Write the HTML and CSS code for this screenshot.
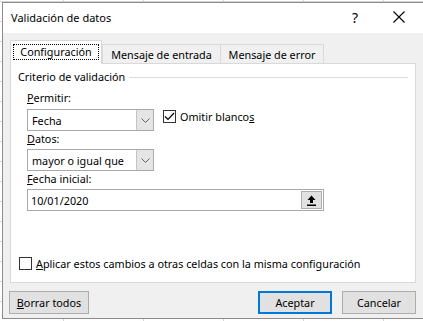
FILE: index.html
```html
<!DOCTYPE html>
<html lang="es">
<head>
    <meta charset="UTF-8">
    <title>Validación de datos</title>
    <link rel="stylesheet" href="styles.css">
</head>
<body>
    <div class="dialog">
        <div class="titlebar">
            <span class="title">Validación de datos</span>
            <span class="help">?</span>
            <svg class="close" width="12" height="12" viewBox="0 0 12 12">
                <path d="M0.5 0.5 L11.5 11.5 M11.5 0.5 L0.5 11.5" stroke="#000" stroke-width="1.1" fill="none"/>
            </svg>
        </div>

        <div class="dialog-body">
            <div class="tabs">
                <div class="tab active"><span class="focus">Configuración</span></div>
                <div class="tab">Mensaje de entrada</div>
                <div class="tab last">Mensaje de error</div>
            </div>

            <div class="panel">
                <div class="group-head">
                    <span>Criterio de validación</span>
                    <span class="rule"></span>
                </div>

                <div class="fields">
                    <div class="field-label first"><u>P</u>ermitir:</div>
                    <div class="row">
                        <div class="combo">
                            <span class="combo-text">Fecha</span>
                            <span class="drop">
                                <svg width="9" height="5" viewBox="0 0 9 5"><path d="M0.5 0.5 L4.5 4.5 L8.5 0.5" stroke="#606060" fill="none"/></svg>
                            </span>
                        </div>
                        <label class="check omit">
                            <span class="box">
                                <svg width="11" height="11" viewBox="0 0 11 11"><path d="M1 5.5 L4 8.5 L10 2" stroke="#000" stroke-width="1.2" fill="none"/></svg>
                            </span>
                            Omitir blanco<u>s</u>
                        </label>
                    </div>

                    <div class="field-label"><u>D</u>atos:</div>
                    <div class="combo">
                        <span class="combo-text">mayor o igual que</span>
                        <span class="drop">
                            <svg width="9" height="5" viewBox="0 0 9 5"><path d="M0.5 0.5 L4.5 4.5 L8.5 0.5" stroke="#606060" fill="none"/></svg>
                        </span>
                    </div>

                    <div class="field-label"><u>F</u>echa inicial:</div>
                    <div class="ref-input">
                        <span class="ref-text">10/01/2020</span>
                        <span class="ref-btn">
                            <svg width="9" height="11" viewBox="0 0 9 11">
                                <path d="M4.5 0.5 L0.5 5 L3 5 L3 8 L6 8 L6 5 L8.5 5 Z" fill="#000"/>
                                <rect x="0" y="9.5" width="9" height="1.5" fill="#000"/>
                            </svg>
                        </span>
                    </div>
                </div>

                <label class="check apply">
                    <span class="box empty"></span>
                    <span><u>A</u>plicar estos cambios a otras celdas con la misma configuración</span>
                </label>
            </div>

            <div class="buttons">
                <button class="btn clear"><u>B</u>orrar todos</button>
                <span class="spacer"></span>
                <button class="btn default">Aceptar</button>
                <button class="btn">Cancelar</button>
            </div>
        </div>
    </div>
</body>
</html>
```

FILE: styles.css
```css
* {
    margin: 0;
    padding: 0;
    box-sizing: border-box;
}

html, body {
    width: 423px;
    height: 321px;
    overflow: hidden;
}

body {
    font-family: 'Segoe UI', 'Noto Sans', 'Open Sans', sans-serif;
    font-size: 10.8px;
    color: #000;
    background-color: #fff;
    background-image:
        linear-gradient(to right, #d4d4d4 1px, transparent 1px),
        linear-gradient(to bottom, #d4d4d4 1px, transparent 1px);
    background-size: 80px 20px;
    background-position: 63px 1px;
}

.dialog {
    margin: 2px 0 0 2px;
    width: 440px;
    height: 317px;
    border: 1px solid #8c8c8c;
    background: #f0f0f0;
    display: flex;
    flex-direction: column;
}

.titlebar {
    height: 30px;
    background: #fff;
    display: flex;
    align-items: center;
    padding-left: 8px;
}

.title {
    font-size: 11px;
    width: 341px;
    margin-top: -1px;
}

.help {
    font-size: 14px;
    width: 41px;
    margin-top: -2px;
}

.close {
    margin-top: -2px;
}

.dialog-body {
    padding: 7px 0 0 7px;
    display: flex;
    flex-direction: column;
}

.tabs {
    display: flex;
    align-items: flex-end;
    margin-bottom: -1px;
}

.tab {
    height: 20px;
    border: 1px solid #d9d9d9;
    border-bottom: none;
    width: 119px;
    display: flex;
    align-items: center;
    justify-content: center;
    padding-bottom: 1px;
}

.tab.last {
    width: 104px;
    margin-left: -1px;
}

.tab.active {
    position: relative;
    z-index: 1;
    width: 92px;
    height: 24px;
    background: #fff;
    align-items: flex-start;
    justify-content: flex-start;
    padding: 3px 0 0 2px;
}

.focus {
    display: block;
    width: 86px;
    height: 16px;
    border: 1px dotted #000;
    line-height: 14px;
    text-align: center;
}

.panel {
    width: 406px;
    height: 220px;
    background: #fff;
    border: 1px solid #d9d9d9;
    padding: 6px 7px 0 7px;
    display: flex;
    flex-direction: column;
}

.group-head {
    display: flex;
    align-items: center;
    height: 14px;
    line-height: 14px;
}

.rule {
    flex: 1;
    height: 1px;
    background: #dcdcdc;
    margin-left: 4px;
}

.fields {
    padding-left: 9px;
    display: flex;
    flex-direction: column;
}

.field-label {
    height: 14px;
    line-height: 14px;
    margin-top: 1px;
    margin-bottom: 3px;
}

.field-label.first {
    margin-top: 7px;
    margin-bottom: 4px;
}

.row {
    display: flex;
    align-items: flex-start;
}

.combo {
    width: 127px;
    height: 22px;
    border: 1px solid #a9a9a9;
    display: flex;
    align-items: center;
}

.combo-text {
    flex: 1;
    padding-left: 4px;
}

.drop {
    width: 17px;
    height: 20px;
    background: #e5e5e5;
    border-left: 1px solid #c4c4c4;
    display: flex;
    align-items: center;
    justify-content: center;
}

.check {
    display: flex;
    align-items: center;
}

.box {
    width: 13px;
    height: 13px;
    border: 1px solid #333;
    background: #fff;
    display: flex;
    align-items: center;
    justify-content: center;
    margin-right: 4px;
}

.omit {
    margin-left: 9px;
    height: 14px;
}

.ref-input {
    width: 297px;
    height: 22px;
    border: 1px solid #a9a9a9;
    display: flex;
    align-items: center;
    padding-right: 1px;
}

.ref-text {
    flex: 1;
    padding-left: 3px;
}

.ref-btn {
    width: 21px;
    height: 18px;
    background: #e1e1e1;
    border: 1px solid #adadad;
    display: flex;
    align-items: center;
    justify-content: center;
}

.apply {
    margin-top: 45px;
    margin-left: 1px;
}

.buttons {
    width: 407px;
    margin-left: -1px;
    margin-top: 8px;
    display: flex;
    align-items: center;
}

.btn {
    font-family: inherit;
    font-size: 10.8px;
    color: #000;
    height: 23px;
    width: 74px;
    background: #e1e1e1;
    border: 1px solid #adadad;
}

.btn.clear {
    width: 80px;
}

.btn.default {
    border: 2px solid #0078d7;
    margin-right: 10px;
}

.spacer {
    flex: 1;
}
```
